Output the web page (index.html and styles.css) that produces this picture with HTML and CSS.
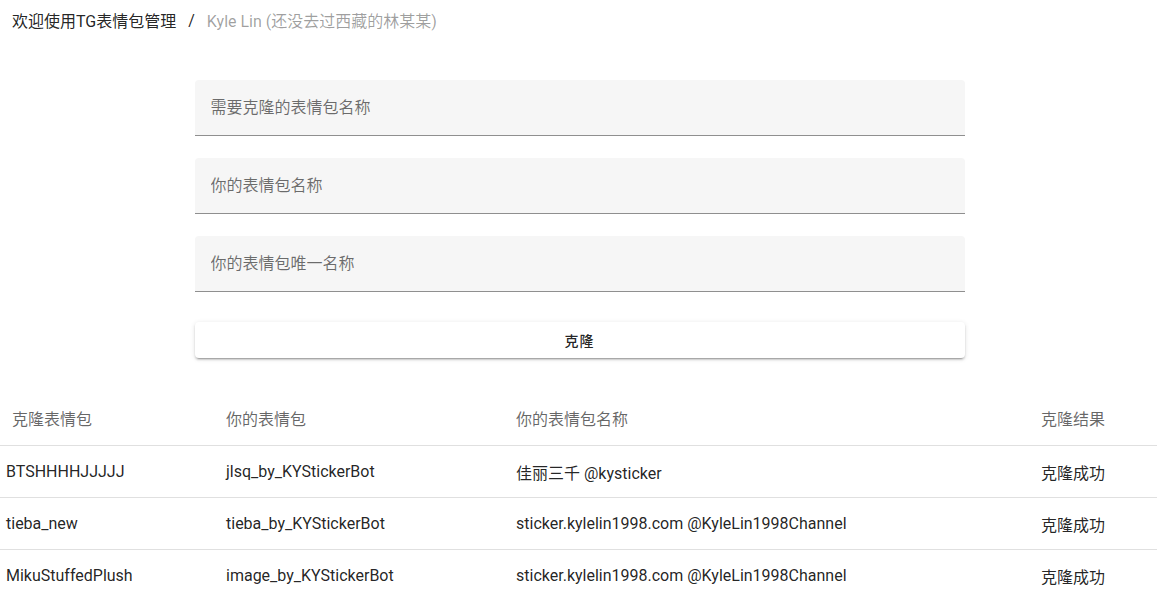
FILE: index.html
```html
<!DOCTYPE html>
<html lang="zh-CN">
<head>
    <meta charset="UTF-8">
    <meta name="viewport" content="width=device-width, initial-scale=1.0">
    <title>TG表情包管理</title>
    <link rel="stylesheet" href="styles.css">
</head>
<body>
    <div class="breadcrumbs">
        <span class="crumb">欢迎使用TG表情包管理</span>
        <span class="divider">/</span>
        <span class="crumb disabled">Kyle Lin (还没去过西藏的林某某)</span>
    </div>

    <div class="form">
        <div class="field">
            <input type="text" placeholder="需要克隆的表情包名称">
        </div>
        <div class="field">
            <input type="text" placeholder="你的表情包名称">
        </div>
        <div class="field">
            <input type="text" placeholder="你的表情包唯一名称">
        </div>
        <button class="btn">克隆</button>
    </div>

    <table class="table">
        <thead>
            <tr>
                <th class="c1">克隆表情包</th>
                <th class="c2">你的表情包</th>
                <th class="c3">你的表情包名称</th>
                <th class="c4">克隆结果</th>
            </tr>
        </thead>
        <tbody>
            <tr>
                <td class="c1">BTSHHHHJJJJJ</td>
                <td>jlsq_by_KYStickerBot</td>
                <td>佳丽三千 @kysticker</td>
                <td>克隆成功</td>
            </tr>
            <tr>
                <td class="c1">tieba_new</td>
                <td>tieba_by_KYStickerBot</td>
                <td>sticker.kylelin1998.com @KyleLin1998Channel</td>
                <td>克隆成功</td>
            </tr>
            <tr>
                <td class="c1">MikuStuffedPlush</td>
                <td>image_by_KYStickerBot</td>
                <td>sticker.kylelin1998.com @KyleLin1998Channel</td>
                <td>克隆成功</td>
            </tr>
        </tbody>
    </table>
</body>
</html>
```

FILE: styles.css
```css
body {
    font-family: Roboto, "Noto Sans CJK SC", sans-serif;
    color: rgba(0, 0, 0, 0.87);
    background: #fff;
    margin: 0;
    padding: 0;
}
.breadcrumbs {
    display: flex;
    align-items: center;
    height: 40px;
    padding: 0 12px;
    font-size: 16px;
}
.divider {
    padding: 0 12px;
}
.crumb.disabled {
    color: rgba(0, 0, 0, 0.38);
}
.form {
    width: 770px;
    margin: 40px auto 0;
    padding-left: 2px;
}
.field {
    margin-bottom: 22px;
}
.field input {
    display: block;
    width: 100%;
    height: 56px;
    box-sizing: border-box;
    padding: 0 16px;
    border: none;
    border-bottom: 1px solid rgba(0, 0, 0, 0.42);
    border-radius: 4px 4px 0 0;
    background: #f6f6f6;
    font-family: inherit;
    font-size: 16px;
    color: rgba(0, 0, 0, 0.87);
    outline: none;
}
.field input::placeholder {
    color: rgba(0, 0, 0, 0.56);
}
.btn {
    display: block;
    width: 100%;
    height: 36px;
    margin-top: 30px;
    border: none;
    border-radius: 4px;
    background: #fff;
    font-family: inherit;
    font-size: 14px;
    font-weight: 500;
    letter-spacing: 1px;
    color: rgba(0, 0, 0, 0.87);
    box-shadow: 0 3px 1px -2px rgba(0, 0, 0, 0.2), 0 2px 2px 0 rgba(0, 0, 0, 0.14), 0 1px 5px 0 rgba(0, 0, 0, 0.12);
    cursor: pointer;
}
.table {
    width: 100%;
    margin-top: 32px;
    border-collapse: collapse;
    font-size: 16px;
}
.table th {
    height: 55px;
    padding: 0 12px;
    text-align: left;
    font-weight: normal;
    font-size: 16px;
    color: rgba(0, 0, 0, 0.6);
    border-bottom: 1px solid rgba(0, 0, 0, 0.12);
}
.table td {
    height: 51px;
    padding: 0 12px;
    border-bottom: 1px solid rgba(0, 0, 0, 0.12);
}
.table td.c1 {
    padding-left: 6px;
}
.table .c1 { width: 190px; }
.table .c2 { width: 266px; }
.table .c3 { width: 501px; }
.table tbody tr:last-child td {
    border-bottom: none;
}
```
